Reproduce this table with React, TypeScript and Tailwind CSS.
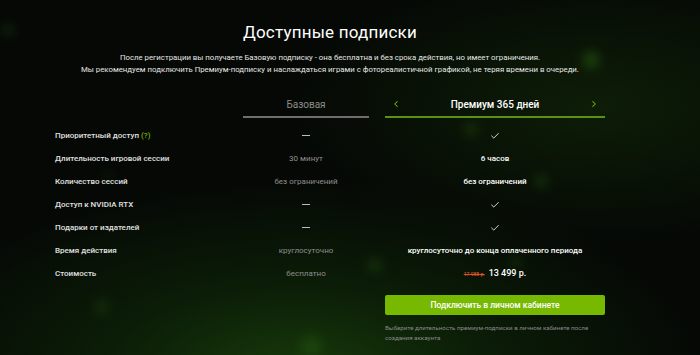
import { Check, ChevronLeft, ChevronRight } from 'lucide-react';

type Row = {
  label: string;
  hint?: boolean;
  basic: string | null;
  premium: string | 'check' | 'price';
};

const rows: Row[] = [
  { label: 'Приоритетный доступ', hint: true, basic: null, premium: 'check' },
  { label: 'Длительность игровой сессии', basic: '30 минут', premium: '6 часов' },
  { label: 'Количество сессий', basic: 'без ограничений', premium: 'без ограничений' },
  { label: 'Доступ к NVIDIA RTX', basic: null, premium: 'check' },
  { label: 'Подарки от издателей', basic: null, premium: 'check' },
  { label: 'Время действия', basic: 'круглосуточно', premium: 'круглосуточно до конца оплаченного периода' },
  { label: 'Стоимость', basic: 'бесплатно', premium: 'price' },
];

function Glow({ className }: { className: string }) {
  return <div className={`pointer-events-none absolute rounded-full bg-[#3f8f1a] blur-[6px] ${className}`} />;
}

export default function App() {
  return (
    <div
      className="relative h-[355px] w-[700px] overflow-hidden bg-[#050805] text-white"
      style={{ fontFamily: 'Roboto, "Noto Sans", sans-serif' }}
    >
      {/* background */}
      <div className="pointer-events-none absolute inset-0 bg-[radial-gradient(ellipse_60%_55%_at_42%_105%,#173a0b_0%,#0b1d07_45%,transparent_100%)]" />
      <div className="pointer-events-none absolute inset-0 bg-[radial-gradient(ellipse_45%_40%_at_85%_30%,#0d1d07_0%,transparent_100%)]" />
      <Glow className="left-[583px] top-[52px] h-[16px] w-[16px] opacity-40" />
      <Glow className="left-[2px] top-[24px] h-[12px] w-[12px] opacity-25" />
      <Glow className="left-[536px] top-[176px] h-[10px] w-[10px] opacity-40" />
      <Glow className="left-[370px] top-[260px] h-[10px] w-[10px] opacity-40" />
      <Glow className="left-[512px] top-[258px] h-[8px] w-[8px] opacity-40" />
      <Glow className="left-[465px] top-[123px] h-[12px] w-[12px] opacity-30" />
      <Glow className="left-[105px] top-[173px] h-[5px] w-[5px] opacity-60" />
      <Glow className="left-[95px] top-[300px] h-[14px] w-[14px] opacity-20" />
      <Glow className="left-[300px] top-[335px] h-[22px] w-[22px] opacity-20" />

      <div className="relative ml-[55px] w-[550px] pt-[21px]">
        <h1 className="text-center text-[17px] leading-[22px] tracking-[0.2px] text-white">Доступные подписки</h1>
        <div className="mt-[9px] text-center text-[7.8px] leading-[12px] text-[#e6e6e6]">
          <p>После регистрации вы получаете Базовую подписку - она бесплатна и без срока действия, но имеет ограничения.</p>
          <p>Мы рекомендуем подключить Премиум-подписку и наслаждаться играми с фотореалистичной графикой, не теряя времени в очереди.</p>
        </div>

        {/* header */}
        <div className="mt-[18px] grid grid-cols-[188px_126px_16px_220px]">
          <div />
          <div className="flex h-[24px] items-center justify-center border-b-2 border-[#6e6e6e] pb-[2px] text-[10px] text-[#8c8c8c]">
            Базовая
          </div>
          <div />
          <div className="flex h-[24px] items-center justify-between border-b-2 border-[#5f8f12] px-[6px] pb-[2px]">
            <ChevronLeft className="h-[10px] w-[10px] text-[#76b900]" strokeWidth={2.5} />
            <span className="text-[10px] font-medium text-white">Премиум 365 дней</span>
            <ChevronRight className="h-[10px] w-[10px] text-[#76b900]" strokeWidth={2.5} />
          </div>
        </div>

        {/* rows */}
        <div className="mt-[6px]">
          {rows.map((r) => (
            <div key={r.label} className="grid h-[23px] grid-cols-[188px_126px_16px_220px] items-center">
              <div className="text-[8px] font-medium text-[#e0e0e0]">
                {r.label}
                {r.hint && <span className="text-[#76b900]"> (?)</span>}
              </div>
              <div className="text-center text-[8px] text-[#8f8f8f]">
                {r.basic ?? <span className="inline-block h-[1px] w-[8px] translate-y-[-2px] bg-[#bdbdbd]" />}
              </div>
              <div />
              <div className="flex items-center justify-center text-[8px] font-medium text-white">
                {r.premium === 'check' ? (
                  <Check className="h-[10px] w-[10px]" strokeWidth={2} />
                ) : r.premium === 'price' ? (
                  <span className="flex items-baseline gap-[4px]">
                    <span className="text-[5px] text-[#d9532c] line-through">17 988 р.</span>
                    <span className="text-[9px] font-medium">13 499 р.</span>
                  </span>
                ) : (
                  r.premium
                )}
              </div>
            </div>
          ))}
        </div>

        <div className="ml-[330px] w-[220px]">
          <button className="mt-[10px] flex h-[20px] w-full items-center justify-center rounded-[2px] bg-[#76b900] text-[8.5px] font-medium text-white">
            Подключить в личном кабинете
          </button>
          <p className="mt-[8px] w-[215px] text-[6.2px] leading-[10px] text-[#8a8a8a]">
            Выберите длительность премиум-подписки в личном кабинете после создания аккаунта
          </p>
        </div>
      </div>
    </div>
  );
}
